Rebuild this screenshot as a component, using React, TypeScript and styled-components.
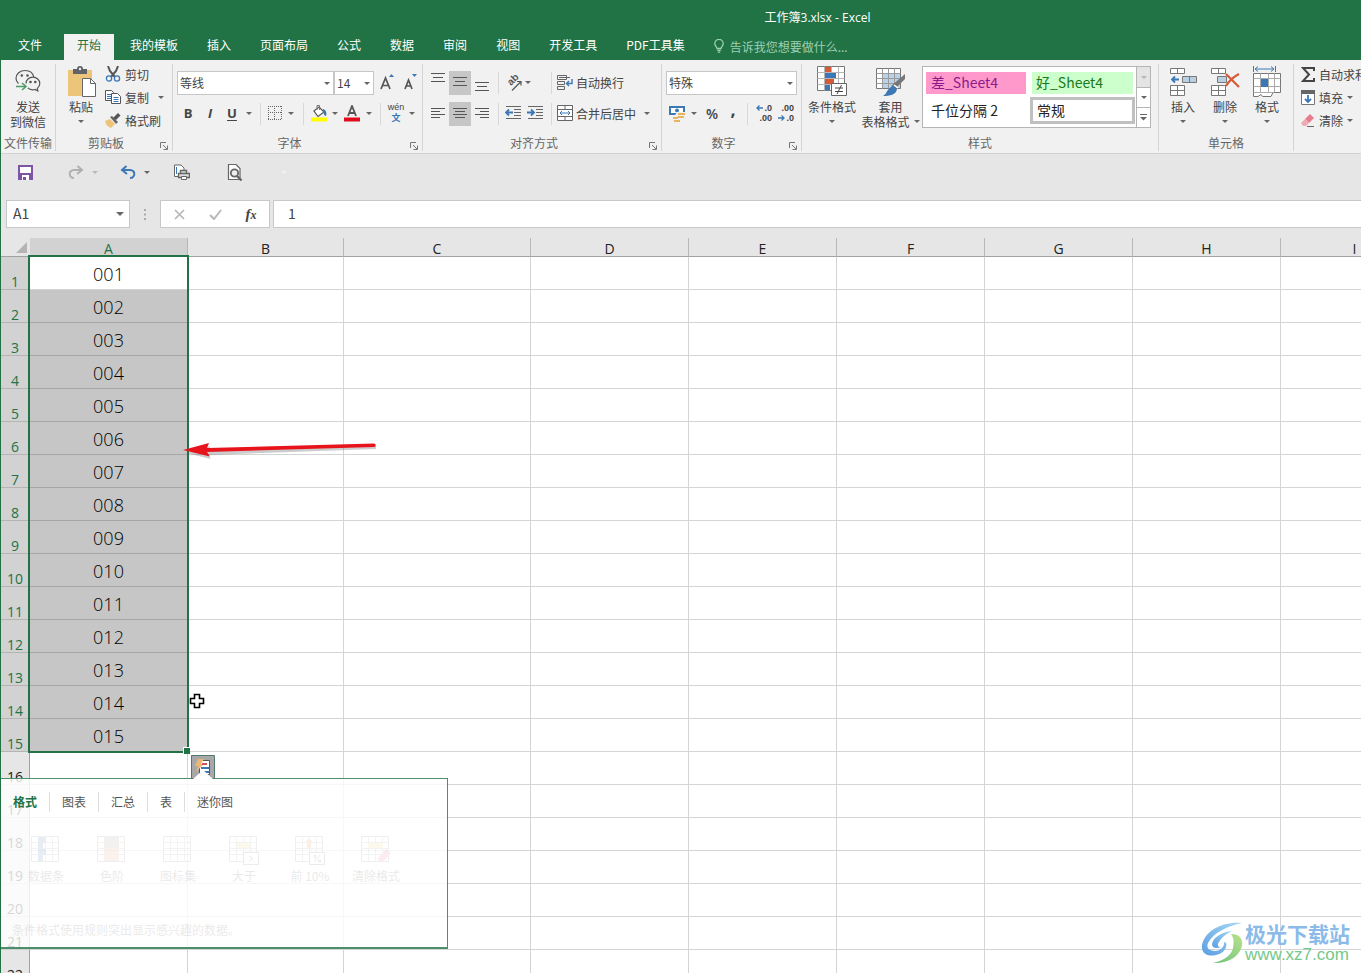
import React from "react";
import styled, { createGlobalStyle, css } from "styled-components";

const GREEN = "#217346";
const INK = "#444444";
const GREY = "#666666";
const BLUE = "#3b78b5";

const Global = createGlobalStyle`
  * { box-sizing: border-box; }
  html, body { margin: 0; padding: 0; }
  body, button, input, select {
    font-family: "Noto Sans CJK SC", "Noto Sans", sans-serif;
    font-size: 12px;
    color: ${INK};
  }
  button { border: 0; padding: 0; background: none; }
  svg { display: block; flex: none; }
`;

const App_ = styled.div`
  height: 100vh;
  display: flex;
  flex-direction: column;
  overflow: hidden;
  background: #e6e6e6;
`;

const TitleBar = styled.header`
  flex: none;
  height: 34px;
  padding-left: 274px;
  display: flex;
  align-items: center;
  justify-content: center;
  font-family: "Open Sans", "Noto Sans CJK SC", sans-serif;
  background: ${GREEN};
  color: #fff;
`;

const TabBar = styled.nav`
  flex: none;
  height: 26px;
  display: flex;
  gap: 3px;
  background: ${GREEN};
`;

const Tab = styled.button<{ $active?: boolean; $file?: boolean }>`
  padding: ${(p) => (p.$file ? "0 19px 5px 18px" : "0 13px 5px")};
  white-space: nowrap;
  color: ${(p) => (p.$active ? GREEN : "#fff")};
  background: ${(p) => (p.$active ? "#f1f1f1" : "transparent")};
`;

const TellMe = styled.button`
  display: flex;
  align-items: center;
  gap: 5px;
  margin-left: 12px;
  padding-bottom: 2px;
  color: #9fcfb2;
  white-space: nowrap;
`;

const Body = styled.div`
  flex: 1;
  min-height: 0;
  display: flex;
  flex-direction: column;
  border-left: 1px solid ${GREEN};
`;

const Ribbon = styled.div`
  flex: none;
  display: flex;
  padding: 4px 0 2px;
  overflow: hidden;
  background: #f1f1f1;
  border-bottom: 1px solid #d2d2d2;
`;

const Group = styled.section<{ $w: number }>`
  flex: none;
  width: ${(p) => p.$w}px;
  display: flex;
  flex-direction: column;
  border-right: 1px solid #d4d4d4;
`;

const GroupBody = styled.div<{ $pad?: number; $gap?: number; $center?: boolean }>`
  display: flex;
  height: 71px;
  padding-left: ${(p) => p.$pad ?? 0}px;
  gap: ${(p) => p.$gap ?? 0}px;
  justify-content: ${(p) => (p.$center ? "center" : "flex-start")};
`;

const GroupLabel = styled.div`
  display: flex;
  height: 16px;
  line-height: 16px;
  color: ${GREY};
  white-space: nowrap;
`;
const GroupName = styled.span`
  flex: 1;
  text-align: center;
`;
const Launcher = styled.button`
  width: 16px;
  padding: 7px 4px 0;
  align-self: flex-start;
`;

const BigButton = styled.button<{ $w: number }>`
  flex: none;
  width: ${(p) => p.$w}px;
  display: flex;
  flex-direction: column;
  align-items: center;
  line-height: 15px;
  white-space: nowrap;
`;
const BigIcon = styled.span`
  height: 35px;
  display: flex;
  align-items: center;
`;
const Line = styled.span`
  height: 15px;
  display: flex;
  align-items: center;
  gap: 4px;
`;

const Stack = styled.div`
  display: flex;
  flex-direction: column;
`;
const SmallButton = styled.button`
  height: 23px;
  padding-bottom: 3px;
  display: flex;
  align-items: center;
  gap: 4px;
  white-space: nowrap;
`;
const CaretSpace = styled.span`
  padding-left: 5px;
`;

const Rows = styled.div`
  display: flex;
  flex-direction: column;
  gap: 7px;
  padding-top: 7px;
`;
const Row = styled.div`
  display: flex;
  align-items: center;
  height: 24px;
`;

const Tool = styled.button<{ $w?: number; $on?: boolean }>`
  flex: none;
  width: ${(p) => p.$w ?? 22}px;
  height: 24px;
  padding-bottom: 2px;
  display: flex;
  align-items: center;
  justify-content: center;
  background: ${(p) => (p.$on ? "#c6c6c6" : "transparent")};
`;
const TextTool = styled.button`
  height: 24px;
  padding-bottom: 2px;
  display: flex;
  align-items: center;
  gap: 3px;
  white-space: nowrap;
`;
const Glyph = styled.span<{ $size?: number; $italic?: boolean; $line?: boolean; $light?: boolean; $raised?: boolean }>`
  font-family: "Open Sans", "Noto Sans", sans-serif;
  font-weight: ${(p) => (p.$light ? 600 : 700)};
  font-size: ${(p) => p.$size ?? 13}px;
  font-style: ${(p) => (p.$italic ? "italic" : "normal")};
  text-decoration: ${(p) => (p.$line ? "underline" : "none")};
  text-underline-offset: 2px;
  padding-bottom: ${(p) => (p.$raised ? 8 : 0)}px;
`;
const Sep = styled.span<{ $tight?: boolean }>`
  flex: none;
  width: 1px;
  height: 22px;
  margin: ${(p) => (p.$tight ? "0 3px 0 5px" : "0 5px")};
  background: #d8d8d8;
`;
const Spacer = styled.span`
  width: 14px;
`;

const SelectBox = styled.span<{ $w: number }>`
  display: grid;
  width: ${(p) => p.$w}px;
  height: 24px;
  align-items: center;
  > * { grid-area: 1 / 1; }
  > svg { justify-self: end; margin-right: 4px; pointer-events: none; }
`;
const Select = styled.select`
  appearance: none;
  width: 100%;
  height: 24px;
  padding: 0 2px 2px;
  border: 1px solid #c6c6c6;
  border-radius: 0;
  background: #fff;
`;

const Gallery = styled.div`
  display: flex;
  width: 229px;
  height: 62px;
  margin-top: 2px;
  border: 1px solid #b5b5b5;
  background: #fff;
`;
const GalleryGrid = styled.div`
  display: grid;
  flex: 1;
  grid-template-columns: 100px 105px;
  grid-template-rows: 22px 27px;
  align-content: center;
  align-items: center;
  column-gap: 4px;
  row-gap: 3px;
  padding: 2px 0 0 3px;
`;
const StyleCell = styled.button<{ $bg?: string; $fg?: string; $on?: boolean }>`
  height: ${(p) => (p.$on ? 27 : 22)}px;
  margin: ${(p) => (p.$bg ? "0 2px" : "0")};
  padding: 0 4px 2px;
  border: ${(p) => (p.$on ? "3px solid #c0c0c0" : "0")};
  display: flex;
  align-items: center;
  font-size: 14px;
  white-space: nowrap;
  color: ${(p) => p.$fg ?? "#222"};
  background: ${(p) => p.$bg ?? "#fff"};
  &:first-child { margin: 0; padding: 0 5px 2px; }
  &:nth-child(3) { padding: 0 5px 2px; }
`;
const GalleryBar = styled.div`
  width: 14px;
  display: grid;
  grid-template-rows: 1fr 1fr 1fr;
  border-left: 1px solid #b5b5b5;
`;
const GalleryStep = styled.button<{ $off?: boolean }>`
  display: flex;
  flex-direction: column;
  align-items: center;
  justify-content: center;
  gap: 2px;
  background: ${(p) => (p.$off ? "#e4e4e4" : "#fff")};
  & + & { border-top: 1px solid #b5b5b5; }
`;

const QuickBar = styled.div`
  flex: none;
  height: 46px;
  display: flex;
  align-items: center;
  padding: 0 0 10px 17px;
`;
const QuickItem = styled.button<{ $w: number }>`
  width: ${(p) => p.$w}px;
  display: flex;
  align-items: center;
  gap: 8px;
`;

const FormulaBar = styled.div`
  flex: none;
  display: flex;
  height: 28px;
  padding-left: 5px;
  margin-bottom: 10px;
`;
const NameBox = styled.label`
  display: flex;
  align-items: center;
  width: 124px;
  padding-right: 5px;
  border: 1px solid #c8c8c8;
  background: #fff;
`;
const BareInput = styled.input`
  flex: 1;
  min-width: 0;
  border: 0;
  outline: 0;
  padding: 0 6px 2px;
  font-size: 14px;
  background: transparent;
`;
const Dots = styled.span`
  width: 30px;
  display: flex;
  align-items: center;
  justify-content: center;
`;
const FxBox = styled.div`
  display: flex;
  width: 110px;
  margin-right: 3px;
  border: 1px solid #c8c8c8;
  background: #fff;
`;
const FxButton = styled.button`
  flex: 1;
  display: flex;
  align-items: center;
  justify-content: center;
`;
const Fx = styled.span`
  font: italic 700 15px "Liberation Serif", serif;
  display: flex;
  align-items: baseline;
  small { font-size: 12px; }
`;
const FormulaField = styled.label`
  flex: 1;
  display: flex;
  padding-left: 8px;
  border: 1px solid #c8c8c8;
  border-right: 0;
  background: #fff;
`;

const Sheet = styled.main`
  position: relative;
  flex: 1;
  min-height: 0;
  overflow: hidden;
  background: #fff;
`;
const Grid = styled.table`
  table-layout: fixed;
  width: 1428px;
  border-collapse: separate;
  border-spacing: 0;
  color: #222;
  font-family: "Open Sans", "Noto Sans CJK SC", sans-serif;
`;
const Corner = styled.th`
  height: 19px;
  padding: 0 3px 3px 0;
  vertical-align: bottom;
  background: #e6e6e6;
  border-bottom: 1px solid #9fa3a0;
  svg { margin-left: auto; }
`;
const ColHead = styled.th<{ $on?: boolean }>`
  height: 19px;
  padding: 0;
  line-height: 14px;
  vertical-align: bottom;
  font-size: 14px;
  font-weight: 400;
  color: ${(p) => (p.$on ? GREEN : "#222")};
  background: ${(p) => (p.$on ? "#d2d2d2" : "#e6e6e6")};
  border-bottom: 1px solid #9fa3a0;
  border-right: 1px solid #b8b8b8;
`;
const RowHead = styled.th<{ $on?: boolean }>`
  height: 33px;
  padding: 0;
  line-height: 15px;
  vertical-align: bottom;
  font-size: 14px;
  font-weight: 400;
  color: ${(p) => (p.$on ? GREEN : "#222")};
  background: ${(p) => (p.$on ? "#d2d2d2" : "#e6e6e6")};
  border-bottom: 1px solid ${(p) => (p.$on ? "#b4b4b4" : "#cfcfcf")};
  border-right: 1px solid #9fa3a0;
`;
const Cell = styled.td<{ $fill?: boolean }>`
  height: 33px;
  padding: 2px 0 0;
  line-height: 26px;
  text-align: center;
  font-size: 18px;
  font-weight: 300;
  color: #000;
  border-right: 1px solid #d4d4d4;
  border-bottom: 1px solid #d4d4d4;
  ${(p) =>
    p.$fill &&
    css`
      background: #c6c6c6;
      border-bottom-color: #a6a6a6;
    `}
`;

const Selection = styled.div`
  position: absolute;
  left: 27px;
  top: 17px;
  width: 161px;
  height: 498px;
  border: 2px solid ${GREEN};
  pointer-events: none;
  &::after {
    content: "";
    position: absolute;
    right: -3px;
    bottom: -3px;
    width: 6px;
    height: 6px;
    border: 1px solid #fff;
    border-right: 0;
    border-bottom: 0;
    background: ${GREEN};
  }
`;
const Overlay = styled.span<{ $x: number; $y: number }>`
  position: absolute;
  left: ${(p) => p.$x}px;
  top: ${(p) => p.$y}px;
  pointer-events: none;
`;
const QuickTag = styled.button`
  position: absolute;
  left: 190px;
  top: 517px;
`;
const Popup = styled.aside`
  position: absolute;
  left: 0;
  top: 540px;
  width: 447px;
  height: 171px;
  display: flex;
  flex-direction: column;
  border: 1px solid #4c8f6c;
  border-left: 0;
  border-bottom-width: 2px;
  background: rgba(255, 255, 255, 0.82);
`;
const PopupTabs = styled.div`
  display: flex;
  align-items: center;
  height: 24px;
  margin-top: 11px;
`;
const PopupTab = styled.button<{ $on?: boolean }>`
  height: 20px;
  padding: 0 12px 2px;
  white-space: nowrap;
  color: ${(p) => (p.$on ? GREEN : "#555")};
  font-weight: ${(p) => (p.$on ? 700 : 400)};
  & + & { border-left: 1px solid #d9e0dc; }
`;
const PopupItems = styled.div`
  display: flex;
  padding: 21px 0 0 12px;
  opacity: 0.11;
`;
const PopupItem = styled.button`
  width: 66px;
  display: flex;
  flex-direction: column;
  align-items: center;
  gap: 2px;
  line-height: 18px;
  white-space: nowrap;
`;
const PopupHint = styled.p`
  margin: 36px 0 0 11px;
  line-height: 18px;
  opacity: 0.11;
`;

const Watermark = styled.div`
  position: absolute;
  right: 11px;
  bottom: 8px;
  display: flex;
  align-items: center;
  gap: 2px;
  pointer-events: none;
`;
const MarkText = styled.div`
  display: flex;
  flex-direction: column;
  white-space: nowrap;
`;
const MarkName = styled.span`
  font-size: 21px;
  font-weight: 700;
  line-height: 24px;
  color: #8bbbe8;
`;
const MarkUrl = styled.span`
  font: 17px/20px "Liberation Sans", sans-serif;
  color: #74c98a;
`;

/* ---------- icons ---------- */

const Caret = ({ c = GREY }: { c?: string }) => (
  <svg width="6" height="3" viewBox="0 0 6 3"><path d="M0 0h6L3 3z" fill={c} /></svg>
);
const BigCaret = () => (
  <svg width="8" height="4" viewBox="0 0 8 4"><path d="M0 0h8L4 4z" fill={GREY} /></svg>
);
const LaunchIcon = () => (
  <svg width="8" height="8" viewBox="0 0 8 8" fill="none" stroke="#777">
    <path d="M.5 6V.5H6M3 3l4 4M7.5 3.5v4h-4" />
  </svg>
);
const Bulb = () => (
  <svg width="12" height="14" viewBox="0 0 12 14" fill="none" stroke="#9fcfb2" strokeWidth="1.3">
    <path d="M4 9.5C4 8 1.8 7 1.8 4.6a4.2 4.2 0 018.4 0C10.2 7 8 8 8 9.500zM4.200 11.300h3.600M4.800 13.200h2.400" />
  </svg>
);
const WeChat = () => (
  <svg width="26" height="25" viewBox="0 0 26 25" fill="none" stroke="#555" strokeWidth="1.200">
    <path d="M3.500 14.500C2 13 1 11.500 1 9.500 1 5 5 1.500 10 1.500c4.500 0 8 2.600 8.800 6.500" />
    <path d="M11 14.500c0-3.500 3-6.300 6.800-6.300s7 2.800 7 6.300c0 2-1 3.700-2.500 4.900l.5 2.600-2.800-1.500c-3 .7-5.500 0-7.200-1.700" />
    <circle cx="6.800" cy="6.500" r=".7" fill="#555" /><circle cx="12.500" cy="6.500" r=".7" fill="#555" />
    <circle cx="15.500" cy="13" r=".7" fill="#555" /><circle cx="20.300" cy="13" r=".7" fill="#555" />
    <path d="M1 17.500h9M7 14l4 3.500L7 21" stroke="#4b9b68" strokeWidth="1.500" />
  </svg>
);
const Paste = () => (
  <svg width="29" height="31" viewBox="0 0 29 31">
    <path d="M1 4h24v26H1z" fill="#ecc47a" />
    <path d="M6 3h4a3 3 0 016 0h4v5H6z" fill="#5f6368" /><circle cx="13" cy="3" r="1.200" fill="#f1f1f1" />
    <path d="M15.500 12.500h8l5 5v13h-13z" fill="#fff" stroke="#666" /><path d="M23.500 12.500v5h5" fill="none" stroke="#666" />
  </svg>
);
const Cut = () => (
  <svg width="16" height="16" viewBox="0 0 16 16" fill="none">
    <path d="M3 0l2 5 5 6M13 0l-2 5-5 6" stroke="#555" strokeWidth="2" />
    <circle cx="4" cy="12.500" r="2.600" stroke={BLUE} strokeWidth="1.300" /><circle cx="12" cy="12.500" r="2.600" stroke={BLUE} strokeWidth="1.300" />
  </svg>
);
const Copy = () => (
  <svg width="16" height="16" viewBox="0 0 16 16" fill="#fff" stroke="#555">
    <path d="M.5 1.500h6l2 2v8h-8z" /><path d="M2 5.500h4M2 7.500h4M2 9.500h4" stroke={BLUE} />
    <path d="M6.500 4.500h6l3 3v7h-9z" /><path d="M8.500 8.500h5M8.500 10.500h5M8.500 12.500h5" stroke={BLUE} />
  </svg>
);
const Brush = () => (
  <svg width="16" height="15" viewBox="0 0 16 15">
    <path d="M0 8l5-2 5 5-4 4C3 14 1 12 0 8z" fill="#ecc47a" /><path d="M5 4l2-1 6 6-2 2z" fill="#666" /><path d="M8 5l5-5 2.500 2.500L11 7z" fill="#555" />
  </svg>
);
const GrowA = ({ down }: { down?: boolean }) => (
  <svg width="15" height="18" viewBox="0 0 15 18" fill="none">
    <path d={down ? "M2 16L5.500 7 9 16M3 13h5" : "M1 16L5.500 5 10 16M2.500 12.500h6"} stroke="#555" strokeWidth="1.700" />
    <path d={down ? "M9 1h5l-2.500 3z" : "M9 4h5l-2.500-3z"} fill={BLUE} />
  </svg>
);
const Borders = () => (
  <svg width="14" height="14" viewBox="0 0 14 14" fill="none" stroke="#666" strokeDasharray="1 1">
    <path d="M0 .5h14M.5 0v14M6.500 0v14M13.500 0v14M0 6.500h14M0 13.500h14" />
  </svg>
);
const Fill = () => (
  <svg width="17" height="17" viewBox="0 0 17 17" fill="none">
    <path d="M3 6l5-4 5 5-6 4.500z" stroke="#555" fill="#fff" strokeWidth="1.200" /><path d="M6 5V.5h2.500V5" stroke="#777" />
    <path d="M12 4c3 1 4 4 3 7-2 0-2-3-3-4z" fill={BLUE} /><path d="M0 12.500h16v4H0z" fill="#ffff00" />
  </svg>
);
const FontColor = () => (
  <svg width="16" height="17" viewBox="0 0 16 17" fill="none">
    <path d="M4 11L8 1l4 10M5.500 8h5" stroke="#555" strokeWidth="1.800" /><path d="M0 12.500h16v4H0z" fill="#e00b1c" />
  </svg>
);
const Pinyin = styled.span`
  display: flex;
  flex-direction: column;
  align-items: center;
  font: 9px/10px "Liberation Sans", sans-serif;
  b {
    font: 700 9px/12px "Noto Sans CJK SC", sans-serif;
    color: ${BLUE};
  }
`;
const HLines = ({ w, y, x = "center" }: { w: number[]; y: number; x?: "left" | "center" | "right" }) => (
  <svg width="14" height="18" viewBox="0 0 14 18" fill="none" stroke="#555">
    {w.map((n, i) => {
      const s = x === "left" ? 0 : x === "right" ? 14 - n : (14 - n) / 2;
      return <path key={i} d={`M${s} ${y + i * (w.length === 4 ? 3 : 4) + 0.5}h${n}`} />;
    })}
  </svg>
);
const Orient = () => (
  <svg width="17" height="17" viewBox="0 0 17 17" fill="none" stroke="#555">
    <text transform="translate(6 12) rotate(-45)" fontFamily="Liberation Sans" fontSize="10" fontWeight="700" fill="#555" stroke="none">ab</text>
    <path d="M7 16.500l8.500-8.500M12 7.500H16V11.500" strokeWidth="1.200" />
  </svg>
);
const Indent = ({ right }: { right?: boolean }) => (
  <svg width="17" height="14" viewBox="0 0 17 14" fill="none" stroke="#666">
    <path d="M1 .5h15M9 3.500h7M9 6.500h7M9 9.500h7M1 12.500h15" />
    <path d={right ? "M0 6.500h7M4 3.500l3 3-3 3" : "M8 6.500H1M4 3.500l-3 3 3 3"} stroke={BLUE} strokeWidth="1.800" />
  </svg>
);
const Wrap = () => (
  <svg width="16" height="16" viewBox="0 0 16 16" fill="none" stroke="#666">
    <path d="M.5 1.500h9v4h-9zM.5 7.500h7v3h-7zM.5 12.500h7v3h-7zM2 3.500h11" /><path d="M15 5v4.500H9.500M12 7L9.500 9.500 12 12" stroke={BLUE} strokeWidth="1.400" />
  </svg>
);
const Merge = () => (
  <svg width="16" height="16" viewBox="0 0 16 16" fill="#fff" stroke="#666">
    <path d="M.5.5h15v15H.5zM.5 4.500h15M.5 11.500h15M8 .5v4M8 11.500v4" /><path d="M3 8h10M5 6L3 8l2 2M11 6l2 2-2 2" stroke={BLUE} fill="none" />
  </svg>
);
const Currency = () => (
  <svg width="17" height="17" viewBox="0 0 17 17">
    <path d="M1 2h14v7H1z" fill="#fff" stroke={BLUE} strokeWidth="2" /><circle cx="8" cy="5.500" r="2" fill={BLUE} />
    <path d="M8 7h9v10H5v-5z" fill="#f1f1f1" />
    <path d="M9 8h7v2H9zM9 11h6v2H9zM4 12h5v2H4zM5 15h6v2H5z" fill="#e9b45c" />
  </svg>
);
const DecimalBox = styled.span`
  display: flex;
  flex-direction: column;
  width: 16px;
  font: 700 9px/10px "Liberation Sans", sans-serif;
`;
const DecimalLine = styled.span`
  display: flex;
  align-items: center;
  justify-content: flex-end;
  gap: 1px;
`;
const TinyArrow = ({ right }: { right?: boolean }) => (
  <svg width="7" height="6" viewBox="0 0 7 6" fill="none" stroke={BLUE} strokeWidth="1.300">
    <path d={right ? "M0 3h6M3.500.5L6 3 3.500 5.500" : "M7 3H1M3.500.5L1 3l2.500 2.500"} />
  </svg>
);
const CondFormat = () => (
  <svg width="30" height="31" viewBox="0 0 30 31">
    <path d="M.5.5h27v24H.5z" fill="#fff" stroke="#777" />
    <path d="M.5 6.500h27M.5 12.500h27M.5 18.500h27M7.500.5v24M14.500.5v24M21.500.5v24" stroke="#b5b5b5" />
    <path d="M8 1h6v5H8zM8 13h9v5H8z" fill="#d65a37" /><path d="M8 7h11v5H8zM8 19h5v5H8z" fill={BLUE} />
    <path d="M14.500 17.500h15v12h-15z" fill="#fff" stroke="#666" /><path d="M18 22h8M18 25.500h8M24.500 19l-4.500 9" stroke="#444" fill="none" />
  </svg>
);
const TableFormat = () => (
  <svg width="30" height="30" viewBox="0 0 30 30">
    <path d="M.5 1.500h24v20H.5z" fill="#fff" stroke="#777" /><path d="M7 7h17v14H7z" fill="#b9d2ea" />
    <path d="M.5 6.500h24M.5 11.500h24M.5 16.500h24M6.500 1.500v20M12.500 1.500v20M18.500 1.500v20" stroke="#9a9a9a" />
    <path d="M29 7v5L19 22l-4-3z" fill="#777" /><path d="M17 19l4 3c-1 6-7 7-14 7 4-2 4-8 10-10z" fill={BLUE} /><path d="M18 18l4 3" stroke="#fff" strokeWidth="1.500" />
  </svg>
);
const InsertCells = () => (
  <svg width="27" height="28" viewBox="0 0 27 28" fill="#fff" stroke="#777">
    <path d="M.5.500h14v5H.5zM7.500.5v5M.5 17.500h14v10H.5zM7.500 17.500v10M.5 22.500h14" /><path d="M12.500 8.500h14v6h-14zM19.500 8.500v6" fill="#b9cfe2" />
    <path d="M9 11.500H2M5 8.500l-3 3 3 3" stroke={BLUE} fill="none" strokeWidth="1.800" />
  </svg>
);
const DeleteCells = () => (
  <svg width="29" height="28" viewBox="0 0 29 28" fill="#fff" stroke="#777">
    <path d="M.5.500h14v5H.5zM7.500.5v5M.5 17.500h14v10H.5zM7.500 17.500v10M.5 22.500h14" /><path d="M6.500 8.500h9v6h-9z" fill="#b9cfe2" />
    <path d="M15 6l13 13M28 6c-6 3-10 7-13 12" stroke="#d65a37" fill="none" strokeWidth="2.200" />
  </svg>
);
const FormatCells = () => (
  <svg width="29" height="32" viewBox="0 0 29 32" fill="none">
    <path d="M.5 0v6M22.500 0v6M2 3h19M5 .5L2 3l3 2.500M18 .5L21 3l-3 2.500" stroke={BLUE} />
    <path d="M.5 7.500h27v19H20l-2 4H9.500l-1.500-2-3 2H.5z" fill="#fff" stroke="#777" /><path d="M.5 12.500h27M.5 20.500h27M7.500 7.500v19M15.500 7.500v19M21.500 7.500v19M.5 26.500h20" stroke="#aaa" /><path d="M8 13h7v8H8z" fill={BLUE} />
  </svg>
);
const Sigma = () => (
  <svg width="14" height="15" viewBox="0 0 14 15" fill="none" stroke="#444" strokeWidth="2"><path d="M13 4V1H2l6 6.500L2 14h11v-3" /></svg>
);
const FillDown = () => (
  <svg width="14" height="15" viewBox="0 0 14 15" fill="none"><path d="M.5 2h13v12.500H.5z" fill="#fff" stroke="#777" /><path d="M0 0h14v4H0z" fill="#666" /><path d="M7 5v7M4 9l3 3 3-3" stroke={BLUE} strokeWidth="1.800" /></svg>
);
const Eraser = () => (
  <svg width="14" height="13" viewBox="0 0 14 13"><path d="M9 0l4 4-5 5-4-4z" fill="#e77c8c" /><path d="M4 5l4 4-3 3H2L0 9z" fill="#efabb4" /><path d="M6 12.500h7" stroke="#666" /></svg>
);
const Save = () => (
  <svg width="15" height="15" viewBox="0 0 15 15"><path d="M0 0h15v15H0z" fill="#7d56a3" /><path d="M2 2h11v6H2zM4 10h7v5H4z" fill="#fff" /><path d="M5 12h3v3H5z" fill="#7d56a3" /></svg>
);
const Curl = ({ flip, c }: { flip?: boolean; c: string }) => (
  <svg width="16" height="14" viewBox="0 0 16 14" fill="none" stroke={c} strokeWidth="2">
    <g transform={flip ? "translate(16 0) scale(-1 1)" : undefined}><path d="M6.500 1L2 5l5 4M2.500 5H10c6 0 5.500 8 0 8" /></g>
  </svg>
);
const PrintIcon = () => (
  <svg width="17" height="17" viewBox="0 0 17 17" fill="#fff" stroke="#666">
    <path d="M6 12.500H1.500V1H8l3 3v3" /><path d="M3.500 3v7" stroke={BLUE} /><path d="M7.500 6.500h6v3h-6zM5.500 9.500h11v4h-11z" fill="#ddd" strokeWidth="1.400" /><path d="M8.500 12.500h5v3h-5z" />
  </svg>
);
const Preview = () => (
  <svg width="16" height="17" viewBox="0 0 16 17" fill="none" stroke="#666">
    <path d="M1.500.5H9l4 4v11H1.500z" fill="#fff" strokeWidth="1.200" /><circle cx="7.500" cy="9" r="3.700" strokeWidth="1.800" fill="#eee" /><path d="M10 12l4.500 4.500" strokeWidth="2.400" />
  </svg>
);
const Plus = () => (
  <svg width="16" height="16" viewBox="0 0 16 16"><path d="M5.500 1.500h5v4h4v5h-4v4h-5v-4h-4v-5h4z" fill="#fff" stroke="#000" strokeWidth="1.600" /></svg>
);
const RedArrow = () => (
  <svg width="200" height="24" viewBox="0 0 200 24">
    <g opacity=".3" transform="translate(2 3)"><path d="M2 12l24-7-2 5 168-5v3L24 14l3 4z" fill="#555" /></g>
    <path d="M1 12l26-7-2 5L192 5.500a1.500 1.500 0 010 3.500L25 14l3 4.500z" fill="#e8141b" />
  </svg>
);
const TagIcon = () => (
  <svg width="24" height="24" viewBox="0 0 24 24">
    <path d="M.5.5h23v23H.5z" fill="#a8a8a8" stroke="#52796a" />
    <path d="M8.500 5.500h10v14h-10z" fill="#fff" stroke="#555" /><path d="M7 4h6l-3 5h3l-8 8 2-6H4z" fill="#edb777" />
    <path d="M11 8h5v2h-5z" fill="#d54f59" /><path d="M10 12h8v2h-8zM13 16h5v2h-5z" fill={BLUE} /><path d="M2 24l10-9 10 9z" fill="#fff" />
  </svg>
);
const MiniGrid = ({ kind }: { kind: number }) => (
  <svg width="30" height="30" viewBox="0 0 30 30">
    <path d="M.5 1.500h27v25H.5z" fill="#fff" stroke="#777" /><path d="M.5 7.500h27M.5 13.500h27M.5 19.500h27M7.500 1.500v25M14.500 1.500v25M21.500 1.500v25" stroke="#999" />
    {kind === 0 && <path d="M7 2h8v6h-3v6h3v6h-3v6H7z" fill="#3668ad" />}
    {kind === 1 && <><path d="M7 2h15v11H7z" fill="#8e8478" /><path d="M7 14h15v12H7z" fill="#e28e6b" /></>}
    {kind === 3 && <path d="M8 8h13v5H8z" fill="#eac85c" />}
    {kind === 4 && <path d="M14 3l5 5h-3v6h-4V8H9z" fill="#d08b30" />}
    {kind === 5 && <><path d="M7 8h15v5H7z" fill="#eac85c" /><path d="M25 14l5 4-9 10-5-4z" fill="#dd6678" /></>}
    {(kind === 3 || kind === 4) && <path d="M14.500 17.500h15v12h-15z" fill="#fff" stroke="#555" />}
    {kind === 3 && <path d="M20 21l4 2.500-4 2.500" fill="none" stroke="#555" />}
    {kind === 4 && <path d="M19 27l6-7M19 20.500h2v2h-2zM23.500 25h2v2h-2z" fill="none" stroke="#555" />}
  </svg>
);
const Logo = () => (
  <svg width="42" height="42" viewBox="0 0 42 42">
    <defs>
      <linearGradient id="sky" x1="1" y1="0" x2="0" y2="1"><stop offset="0" stopColor="#a5d8f5" /><stop offset="1" stopColor="#5b9fe0" /></linearGradient>
      <linearGradient id="leaf" x1="0" y1="1" x2="1" y2="0"><stop offset="0" stopColor="#6cc47c" /><stop offset="1" stopColor="#b9e08c" /></linearGradient>
    </defs>
    <path d="M41 1C23-1 4 8 1 23c-1 8 5 12 14 10 5-1 9-4 10-8 1-3 0-5-2-5 1 5-4 9-9 9-6 0-9-3-7-8C12 11 26 4 41 1z" fill="url(#sky)" />
    <path d="M31 9C20 10 12 16 11 22c0 4 4 5 9 3-3 0-4-2-2-5 3-5 7-8 13-11z" fill="url(#sky)" />
    <path d="M30 12c11 0 13 8 10 15-4 9-15 15-28 14 10-2 19-8 20-15 1-6 1-10-2-14z" fill="url(#leaf)" />
  </svg>
);

/* ---------- parts ---------- */

const tabs = ["文件", "开始", "我的模板", "插入", "页面布局", "公式", "数据", "审阅", "视图", "开发工具", "PDF工具集"];
const columns: [string, number][] = [["A", 158], ["B", 156], ["C", 187], ["D", 158], ["E", 148], ["F", 148], ["G", 148], ["H", 148], ["I", 148]];
const rowNumbers = Array.from({ length: 22 }, (_, i) => i + 1);
const FILLED = 15;

const RibbonGroup = ({ w, name, launch, children }: { w: number; name: string; launch?: boolean; children: React.ReactNode }) => (
  <Group $w={w} aria-label={name}>
    {children}
    <GroupLabel>
      <GroupName>{name}</GroupName>
      {launch && <Launcher aria-label={`${name}设置`}><LaunchIcon /></Launcher>}
    </GroupLabel>
  </Group>
);

const Drop = ({ w, label, value }: { w: number; label: string; value: string }) => (
  <SelectBox $w={w}>
    <Select aria-label={label} defaultValue={value}><option>{value}</option></Select>
    <Caret />
  </SelectBox>
);

const Big = ({ w, icon, lines, caret }: { w: number; icon: React.ReactNode; lines: string[]; caret?: boolean }) => (
  <BigButton $w={w}>
    <BigIcon>{icon}</BigIcon>
    {lines.map((l, i) => (
      <Line key={l}>{l}{caret && i === 1 && <Caret />}</Line>
    ))}
    {caret && lines.length === 1 && <Line><Caret /></Line>}
  </BigButton>
);

const RibbonView = () => (
  <Ribbon>
    <RibbonGroup w={55} name="文件传输">
      <GroupBody $center><Big w={54} icon={<WeChat />} lines={["发送", "到微信"]} /></GroupBody>
    </RibbonGroup>

    <RibbonGroup w={117} name="剪贴板" launch>
      <GroupBody $pad={5} $gap={4}>
        <Big w={40} icon={<Paste />} lines={["粘贴"]} caret />
        <Stack>
          <SmallButton><Cut />剪切</SmallButton>
          <SmallButton><Copy />复制<CaretSpace><Caret /></CaretSpace></SmallButton>
          <SmallButton><Brush />格式刷</SmallButton>
        </Stack>
      </GroupBody>
    </RibbonGroup>

    <RibbonGroup w={250} name="字体" launch>
      <GroupBody $pad={4}>
        <Rows>
          <Row>
            <Drop w={157} label="字体" value="等线" />
            <Drop w={40} label="字号" value="14" />
            <Tool $w={26} aria-label="增大字号"><GrowA /></Tool>
            <Tool $w={20} aria-label="减小字号"><GrowA down /></Tool>
          </Row>
          <Row>
            <Tool aria-label="加粗"><Glyph>B</Glyph></Tool>
            <Tool aria-label="倾斜"><Glyph $italic>I</Glyph></Tool>
            <Tool aria-label="下划线"><Glyph $line>U</Glyph></Tool>
            <Tool $w={12} aria-label="下划线选项"><Caret /></Tool>
            <Sep />
            <Tool $w={18} aria-label="边框"><Borders /></Tool>
            <Tool $w={14} aria-label="边框选项"><Caret /></Tool>
            <Sep />
            <Tool $w={20} aria-label="填充颜色"><Fill /></Tool>
            <Tool $w={12} aria-label="填充选项"><Caret /></Tool>
            <Tool aria-label="字体颜色"><FontColor /></Tool>
            <Tool $w={12} aria-label="颜色选项"><Caret /></Tool>
            <Sep />
            <Tool $w={20} aria-label="拼音"><Pinyin>wén<b>文</b></Pinyin></Tool>
            <Tool $w={12} aria-label="拼音选项"><Caret /></Tool>
          </Row>
        </Rows>
      </GroupBody>
    </RibbonGroup>

    <RibbonGroup w={239} name="对齐方式" launch>
      <GroupBody $pad={4}>
        <Rows>
          <Row>
            <Tool aria-label="顶端对齐"><HLines w={[14, 10, 14]} y={0} /></Tool>
            <Tool $on aria-label="垂直居中"><HLines w={[14, 10, 14]} y={4} /></Tool>
            <Tool aria-label="底端对齐"><HLines w={[14, 10, 14]} y={9} /></Tool>
            <Sep $tight />
            <Tool aria-label="方向"><Orient /></Tool>
            <Tool $w={8} aria-label="方向选项"><Caret /></Tool>
            <Spacer />
            <Sep />
            <TextTool><Wrap />自动换行</TextTool>
          </Row>
          <Row>
            <Tool aria-label="左对齐"><HLines w={[14, 9, 14, 9]} y={4} x="left" /></Tool>
            <Tool $on aria-label="居中"><HLines w={[14, 10, 14, 10]} y={4} /></Tool>
            <Tool aria-label="右对齐"><HLines w={[14, 9, 14, 9]} y={4} x="right" /></Tool>
            <Sep $tight />
            <Tool aria-label="减少缩进"><Indent /></Tool>
            <Tool aria-label="增加缩进"><Indent right /></Tool>
            <Sep />
            <TextTool><Merge />合并后居中</TextTool>
            <Tool aria-label="合并选项"><Caret /></Tool>
          </Row>
        </Rows>
      </GroupBody>
    </RibbonGroup>

    <RibbonGroup w={140} name="数字" launch>
      <GroupBody $pad={4}>
        <Rows>
          <Row><Drop w={131} label="数字格式" value="特殊" /></Row>
          <Row>
            <Tool aria-label="会计格式"><Currency /></Tool>
            <Tool $w={12} aria-label="会计选项"><Caret /></Tool>
            <Tool $w={24} aria-label="百分比"><Glyph $size={14} $light>%</Glyph></Tool>
            <Tool $w={18} aria-label="千位分隔"><Glyph $size={18} $raised>,</Glyph></Tool>
            <Sep />
            <Tool aria-label="增加小数位">
              <DecimalBox><DecimalLine><TinyArrow />.0</DecimalLine><DecimalLine>.00</DecimalLine></DecimalBox>
            </Tool>
            <Tool aria-label="减少小数位">
              <DecimalBox><DecimalLine>.00</DecimalLine><DecimalLine><TinyArrow right />.0</DecimalLine></DecimalBox>
            </Tool>
          </Row>
        </Rows>
      </GroupBody>
    </RibbonGroup>

    <RibbonGroup w={357} name="样式">
      <GroupBody $pad={3}>
        <Big w={54} icon={<CondFormat />} lines={["条件格式"]} caret />
        <Big w={63} icon={<TableFormat />} lines={["套用", "表格格式"]} caret />
        <Gallery>
          <GalleryGrid>
            <StyleCell $bg="#ff99cc" $fg="#8b1a8b">差_Sheet4</StyleCell>
            <StyleCell $bg="#ccffcc" $fg="#1a7a1a">好_Sheet4</StyleCell>
            <StyleCell>千位分隔 2</StyleCell>
            <StyleCell $on>常规</StyleCell>
          </GalleryGrid>
          <GalleryBar>
            <GalleryStep $off aria-label="上一行"><Caret c="#b5b5b5" /></GalleryStep>
            <GalleryStep aria-label="下一行"><Caret /></GalleryStep>
            <GalleryStep aria-label="其他">
              <svg width="7" height="7" viewBox="0 0 7 7"><path d="M0 .5h7" stroke={GREY} /><path d="M0 3h7L3.500 6.500z" fill={GREY} /></svg>
            </GalleryStep>
          </GalleryBar>
        </Gallery>
      </GroupBody>
    </RibbonGroup>

    <RibbonGroup w={135} name="单元格">
      <GroupBody $pad={3}>
        <Big w={42} icon={<InsertCells />} lines={["插入"]} caret />
        <Big w={42} icon={<DeleteCells />} lines={["删除"]} caret />
        <Big w={42} icon={<FormatCells />} lines={["格式"]} caret />
      </GroupBody>
    </RibbonGroup>

    <RibbonGroup w={180} name="">
      <GroupBody $pad={7}>
        <Stack>
          <SmallButton><Sigma />自动求和</SmallButton>
          <SmallButton><FillDown />填充<Caret /></SmallButton>
          <SmallButton><Eraser />清除<Caret /></SmallButton>
        </Stack>
      </GroupBody>
    </RibbonGroup>
  </Ribbon>
);

const SheetView = () => (
  <Sheet>
    <Grid>
      <colgroup>
        <col style={{ width: 29 }} />
        {columns.map(([n, w]) => <col key={n} style={{ width: w }} />)}
      </colgroup>
      <thead>
        <tr>
          <Corner><svg width="11" height="11" viewBox="0 0 11 11"><path d="M11 0v11H0z" fill="#b4b4b4" /></svg></Corner>
          {columns.map(([n]) => <ColHead key={n} $on={n === "A"}>{n}</ColHead>)}
        </tr>
      </thead>
      <tbody>
        {rowNumbers.map((r) => (
          <tr key={r}>
            <RowHead $on={r <= FILLED}>{r}</RowHead>
            {columns.map(([n]) => (
              <Cell key={n} $fill={n === "A" && r > 1 && r <= FILLED}>
                {n === "A" && r <= FILLED ? String(r).padStart(3, "0") : null}
              </Cell>
            ))}
          </tr>
        ))}
      </tbody>
    </Grid>
    <Selection />
    <Overlay $x={181} $y={200}><RedArrow /></Overlay>
    <Overlay $x={188} $y={455}><Plus /></Overlay>
    <Popup>
      <PopupTabs>
        {["格式", "图表", "汇总", "表", "迷你图"].map((t, i) => <PopupTab key={t} $on={i === 0}>{t}</PopupTab>)}
      </PopupTabs>
      <PopupItems>
        {["数据条", "色阶", "图标集", "大于", "前 10%", "清除格式"].map((t, i) => (
          <PopupItem key={t}><MiniGrid kind={i} />{t}</PopupItem>
        ))}
      </PopupItems>
      <PopupHint>条件格式使用规则突出显示感兴趣的数据。</PopupHint>
    </Popup>
    <QuickTag aria-label="快速分析"><TagIcon /></QuickTag>
    <Watermark>
      <Logo />
      <MarkText><MarkName>极光下载站</MarkName><MarkUrl>www.xz7.com</MarkUrl></MarkText>
    </Watermark>
  </Sheet>
);

export default function App() {
  return (
    <App_>
      <Global />
      <TitleBar>工作簿3.xlsx - Excel</TitleBar>
      <TabBar>
        {tabs.map((t, i) => <Tab key={t} $file={i === 0} $active={i === 1}>{t}</Tab>)}
        <TellMe><Bulb />告诉我您想要做什么...</TellMe>
      </TabBar>
      <Body>
        <RibbonView />
        <QuickBar>
          <QuickItem $w={50} aria-label="保存"><Save /></QuickItem>
          <QuickItem $w={52} aria-label="恢复"><Curl flip c="#b0b0b0" /><Caret c="#b8b8b8" /></QuickItem>
          <QuickItem $w={53} aria-label="撤消"><Curl c={BLUE} /><Caret /></QuickItem>
          <QuickItem $w={54} aria-label="快速打印"><PrintIcon /></QuickItem>
          <QuickItem $w={54} aria-label="打印预览"><Preview /></QuickItem>
          <QuickItem $w={12} aria-label="自定义"><Caret c="#f2f2f2" /></QuickItem>
        </QuickBar>
        <FormulaBar>
          <NameBox><BareInput aria-label="名称框" defaultValue="A1" /><BigCaret /></NameBox>
          <Dots><svg width="2" height="11" viewBox="0 0 2 11"><path d="M0 0h2v2H0zM0 4.500h2v2H0zM0 9h2v2H0z" fill="#aaa" /></svg></Dots>
          <FxBox>
            <FxButton aria-label="取消"><svg width="11" height="11" viewBox="0 0 11 11"><path d="M1 1l9 9M10 1l-9 9" stroke="#b8b8b8" strokeWidth="1.700" /></svg></FxButton>
            <FxButton aria-label="输入"><svg width="13" height="11" viewBox="0 0 13 11"><path d="M1 6l4 4 7-9" fill="none" stroke="#b8b8b8" strokeWidth="2" /></svg></FxButton>
            <FxButton aria-label="插入函数"><Fx>f<small>x</small></Fx></FxButton>
          </FxBox>
          <FormulaField><BareInput aria-label="编辑栏" defaultValue="1" /></FormulaField>
        </FormulaBar>
        <SheetView />
      </Body>
    </App_>
  );
}
